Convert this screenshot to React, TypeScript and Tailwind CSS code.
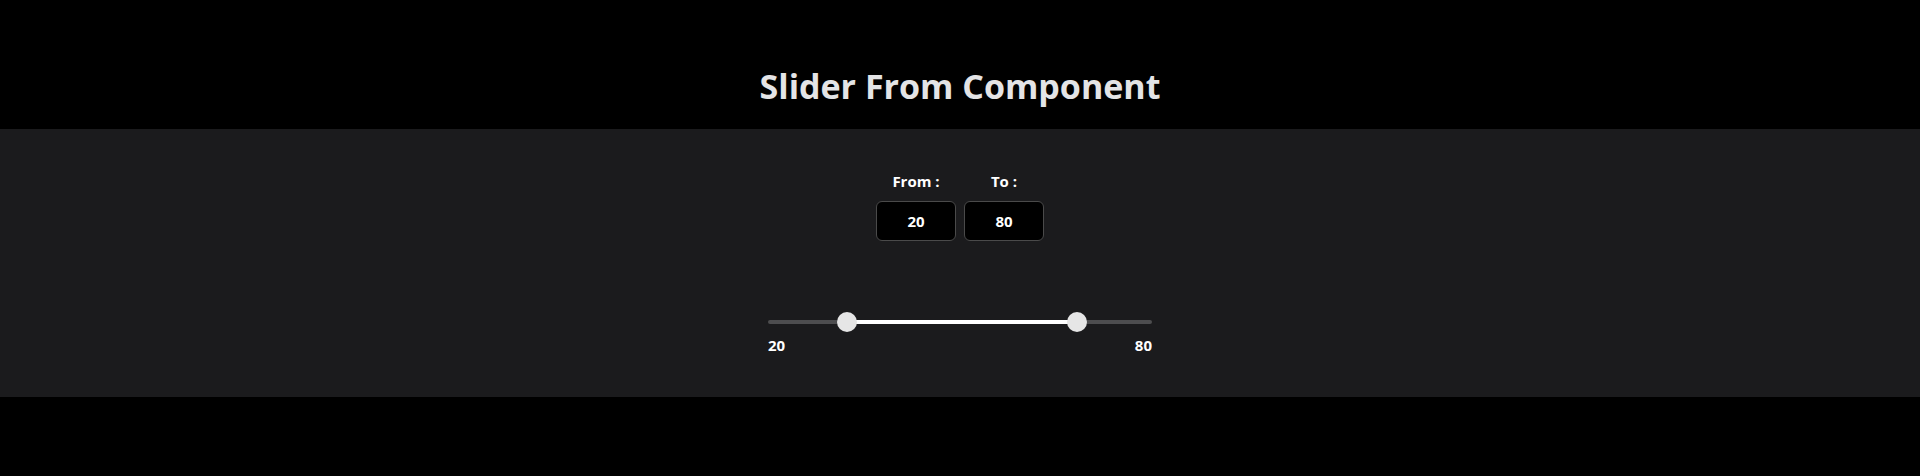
import React from "react";

export default function App() {
  const font = { fontFamily: '"Open Sans", "Noto Sans", "Liberation Sans", sans-serif' };
  return (
    <div className="w-[1920px] h-[476px] bg-black flex flex-col" style={font}>
      <header className="h-[129px] flex items-start justify-center pt-[63px]">
        <h1 className="text-[34px] leading-[46px] font-bold text-[#e4e4e6]">Slider From Component</h1>
      </header>
      <section className="h-[268px] bg-[#1b1b1d] flex flex-col items-center pt-[42px]">
        <div className="flex gap-2">
          <div className="flex flex-col items-center w-[80px]">
            <span className="text-[15px] leading-5 font-bold text-white">From :</span>
            <div className="mt-[10px] w-[80px] h-[40px] rounded-md border border-[#4a4a4a] bg-black flex items-center justify-center text-[15px] font-bold text-white">20</div>
          </div>
          <div className="flex flex-col items-center w-[80px]">
            <span className="text-[15px] leading-5 font-bold text-white">To :</span>
            <div className="mt-[10px] w-[80px] h-[40px] rounded-md border border-[#4a4a4a] bg-black flex items-center justify-center text-[15px] font-bold text-white">80</div>
          </div>
        </div>
        <div className="mt-[71px] w-[384px] flex flex-col">
          <div className="relative h-[20px] flex items-center">
            <div className="w-full h-[4px] rounded-full bg-[#4d4d4f]" />
            <div className="absolute left-[79px] w-[230px] h-[4px] bg-white top-[8px]" />
            <div className="absolute left-[69px] top-0 w-[20px] h-[20px] rounded-full bg-[#e6e6e6]" />
            <div className="absolute left-[299px] top-0 w-[20px] h-[20px] rounded-full bg-[#e6e6e6]" />
          </div>
          <div className="mt-[3px] flex justify-between text-[15px] leading-5 font-bold text-white">
            <span>20</span>
            <span>80</span>
          </div>
        </div>
      </section>
    </div>
  );
}
